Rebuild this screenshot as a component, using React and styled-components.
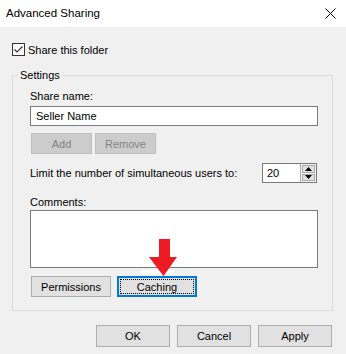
import React from "react";
import styled, { createGlobalStyle } from "styled-components";

const GlobalStyle = createGlobalStyle`
  body {
    margin: 0;
    background: #f0f0f0;
    font-family: "Segoe UI", "Liberation Sans", Arial, sans-serif;
    font-size: 11px;
    color: #000;
  }
`;

function App() {
  return (
    <Window>
      <GlobalStyle />
      <TitleBar>
        <Title>Advanced Sharing</Title>
        <CloseBtn>
          <svg width="11" height="11" viewBox="0 0 11 11">
            <path d="M0.5 0.5 L10.5 10.5 M10.5 0.5 L0.5 10.5" stroke="#000" strokeWidth="1" />
          </svg>
        </CloseBtn>
      </TitleBar>
      <Body>
        <CheckRow>
          <CheckBox>
            <svg width="11" height="11" viewBox="0 0 11 11">
              <path d="M1.5 5.5 L4 8 L9.5 2.5" stroke="#333" strokeWidth="1.2" fill="none" />
            </svg>
          </CheckBox>
          <span>Share this folder</span>
        </CheckRow>

        <Group>
          <Legend>Settings</Legend>
          <Label mt="3px">Share name:</Label>
          <TextBox>Seller Name</TextBox>
          <ButtonRow>
            <Button disabled w="61px">Add</Button>
            <Button disabled w="61px">Remove</Button>
          </ButtonRow>
          <LimitRow>
            <span>Limit the number of simultaneous users to:</span>
            <Spinner>
              <SpinValue>20</SpinValue>
              <SpinButtons>
                <SpinBtn>
                  <svg width="7" height="4" viewBox="0 0 7 4"><path d="M3.5 0 L7 4 L0 4 Z" fill="#000" /></svg>
                </SpinBtn>
                <SpinBtn>
                  <svg width="7" height="4" viewBox="0 0 7 4"><path d="M0 0 L7 0 L3.5 4 Z" fill="#000" /></svg>
                </SpinBtn>
              </SpinButtons>
            </Spinner>
          </LimitRow>
          <Label mt="12px">Comments:</Label>
          <CommentBox />
          <ActionRow>
            <Button w="80px">Permissions</Button>
            <Button w="80px" focused>
              <FocusRing>Caching</FocusRing>
            </Button>
            <Arrow>
              <svg width="37" height="38" viewBox="0 0 37 38">
                <rect x="0" y="31" width="33" height="4" fill="#fff" />
                <path d="M18 0 H29 V18 H36 L22.5 37 L8 18 H18 Z" fill="#ed1c24" />
              </svg>
            </Arrow>
          </ActionRow>
        </Group>

        <Footer>
          <Button w="74px" h="22px">OK</Button>
          <Button w="74px" h="22px">Cancel</Button>
          <Button w="74px" h="22px">Apply</Button>
        </Footer>
      </Body>
    </Window>
  );
}

export default App;

const Window = styled.div`
  width: 346px;
  height: 354px;
  display: flex;
  flex-direction: column;
  overflow: hidden;
`;

const TitleBar = styled.div`
  height: 27px;
  background: #fff;
  display: flex;
  align-items: center;
  justify-content: space-between;
  padding: 0 8px 0 6px;
  box-sizing: border-box;
`;

const Title = styled.div`
  font-size: 11.5px;
  padding-bottom: 1px;
`;

const CloseBtn = styled.div`
  display: flex;
  width: 11px;
  height: 11px;
  margin-right: 2px;
  margin-bottom: 1px;
`;

const Body = styled.div`
  padding: 0 13px 0 12px;
  display: flex;
  flex-direction: column;
`;

const CheckRow = styled.div`
  display: flex;
  align-items: center;
  gap: 3px;
  margin-top: 16px;
  height: 13px;
`;

const CheckBox = styled.div`
  width: 13px;
  height: 13px;
  box-sizing: border-box;
  border: 1px solid #333;
  background: #fff;
  display: flex;
  align-items: center;
  justify-content: center;
`;

const Group = styled.fieldset`
  position: relative;
  margin: 12px 0 0 0;
  border: 1px solid #dcdcdc;
  padding: 4px 14px 12px 17px;
  min-width: 0;
  display: flex;
  flex-direction: column;
  height: 243px;
  box-sizing: border-box;
`;

const Legend = styled.legend`
  padding: 0 2px;
  margin-left: -12px;
  line-height: 14px;
`;

const Label = styled.div`
  line-height: 15px;
  margin-top: ${({ mt }) => mt};
`;

const TextBox = styled.div`
  margin-top: 2px;
  height: 20px;
  box-sizing: border-box;
  border: 1px solid #7a7a7a;
  background: #fff;
  padding: 1px 5px;
  line-height: 16px;
`;

const ButtonRow = styled.div`
  display: flex;
  gap: 3px;
  margin-top: 7px;
  padding-left: 1px;
`;

const Button = styled.button`
  width: ${({ w }) => w};
  height: ${({ h }) => h || "21px"};
  box-sizing: border-box;
  font: inherit;
  font-size: 11px;
  padding: 0;
  background: ${({ disabled }) => (disabled ? "#cccccc" : "#e1e1e1")};
  color: ${({ disabled }) => (disabled ? "#838383" : "#000")};
  border: ${({ focused }) => (focused ? "2px solid #0078d7" : "1px solid #adadad")};
  ${({ disabled }) => disabled && "border-color: #bfbfbf;"}
  display: flex;
  align-items: center;
  justify-content: center;
`;

const FocusRing = styled.span`
  display: flex;
  align-items: center;
  justify-content: center;
  width: calc(100% - 2px);
  height: calc(100% - 2px);
  box-sizing: border-box;
  border: 1px dotted #000;
`;

const LimitRow = styled.div`
  display: flex;
  align-items: center;
  justify-content: space-between;
  margin-top: 9px;
  height: 20px;
`;

const Spinner = styled.div`
  display: flex;
  height: 20px;
  width: 55px;
  box-sizing: border-box;
  border: 1px solid #7a7a7a;
  background: #fff;
  margin-right: 1px;
`;

const SpinValue = styled.div`
  flex: 1;
  padding-left: 4px;
  line-height: 18px;
`;

const SpinButtons = styled.div`
  width: 16px;
  display: flex;
  flex-direction: column;
  gap: 1px;
  padding: 1px;
  box-sizing: border-box;
  background: #f0f0f0;
  border-left: 1px solid #adadad;
`;

const SpinBtn = styled.div`
  flex: 1;
  background: #e1e1e1;
  border: 1px solid #adadad;
  display: flex;
  align-items: center;
  justify-content: center;
`;

const CommentBox = styled.div`
  height: 58px;
  box-sizing: border-box;
  border: 1px solid #7a7a7a;
  background: #fff;
`;

const ActionRow = styled.div`
  position: relative;
  display: flex;
  gap: 6px;
  margin-top: 8px;
  padding-left: 1px;
`;

const Arrow = styled.div`
  position: absolute;
  left: 111px;
  top: -37px;
  display: flex;
`;

const Footer = styled.div`
  display: flex;
  justify-content: flex-end;
  gap: 7px;
  margin-top: 14px;
  padding-right: 1px;
`;
